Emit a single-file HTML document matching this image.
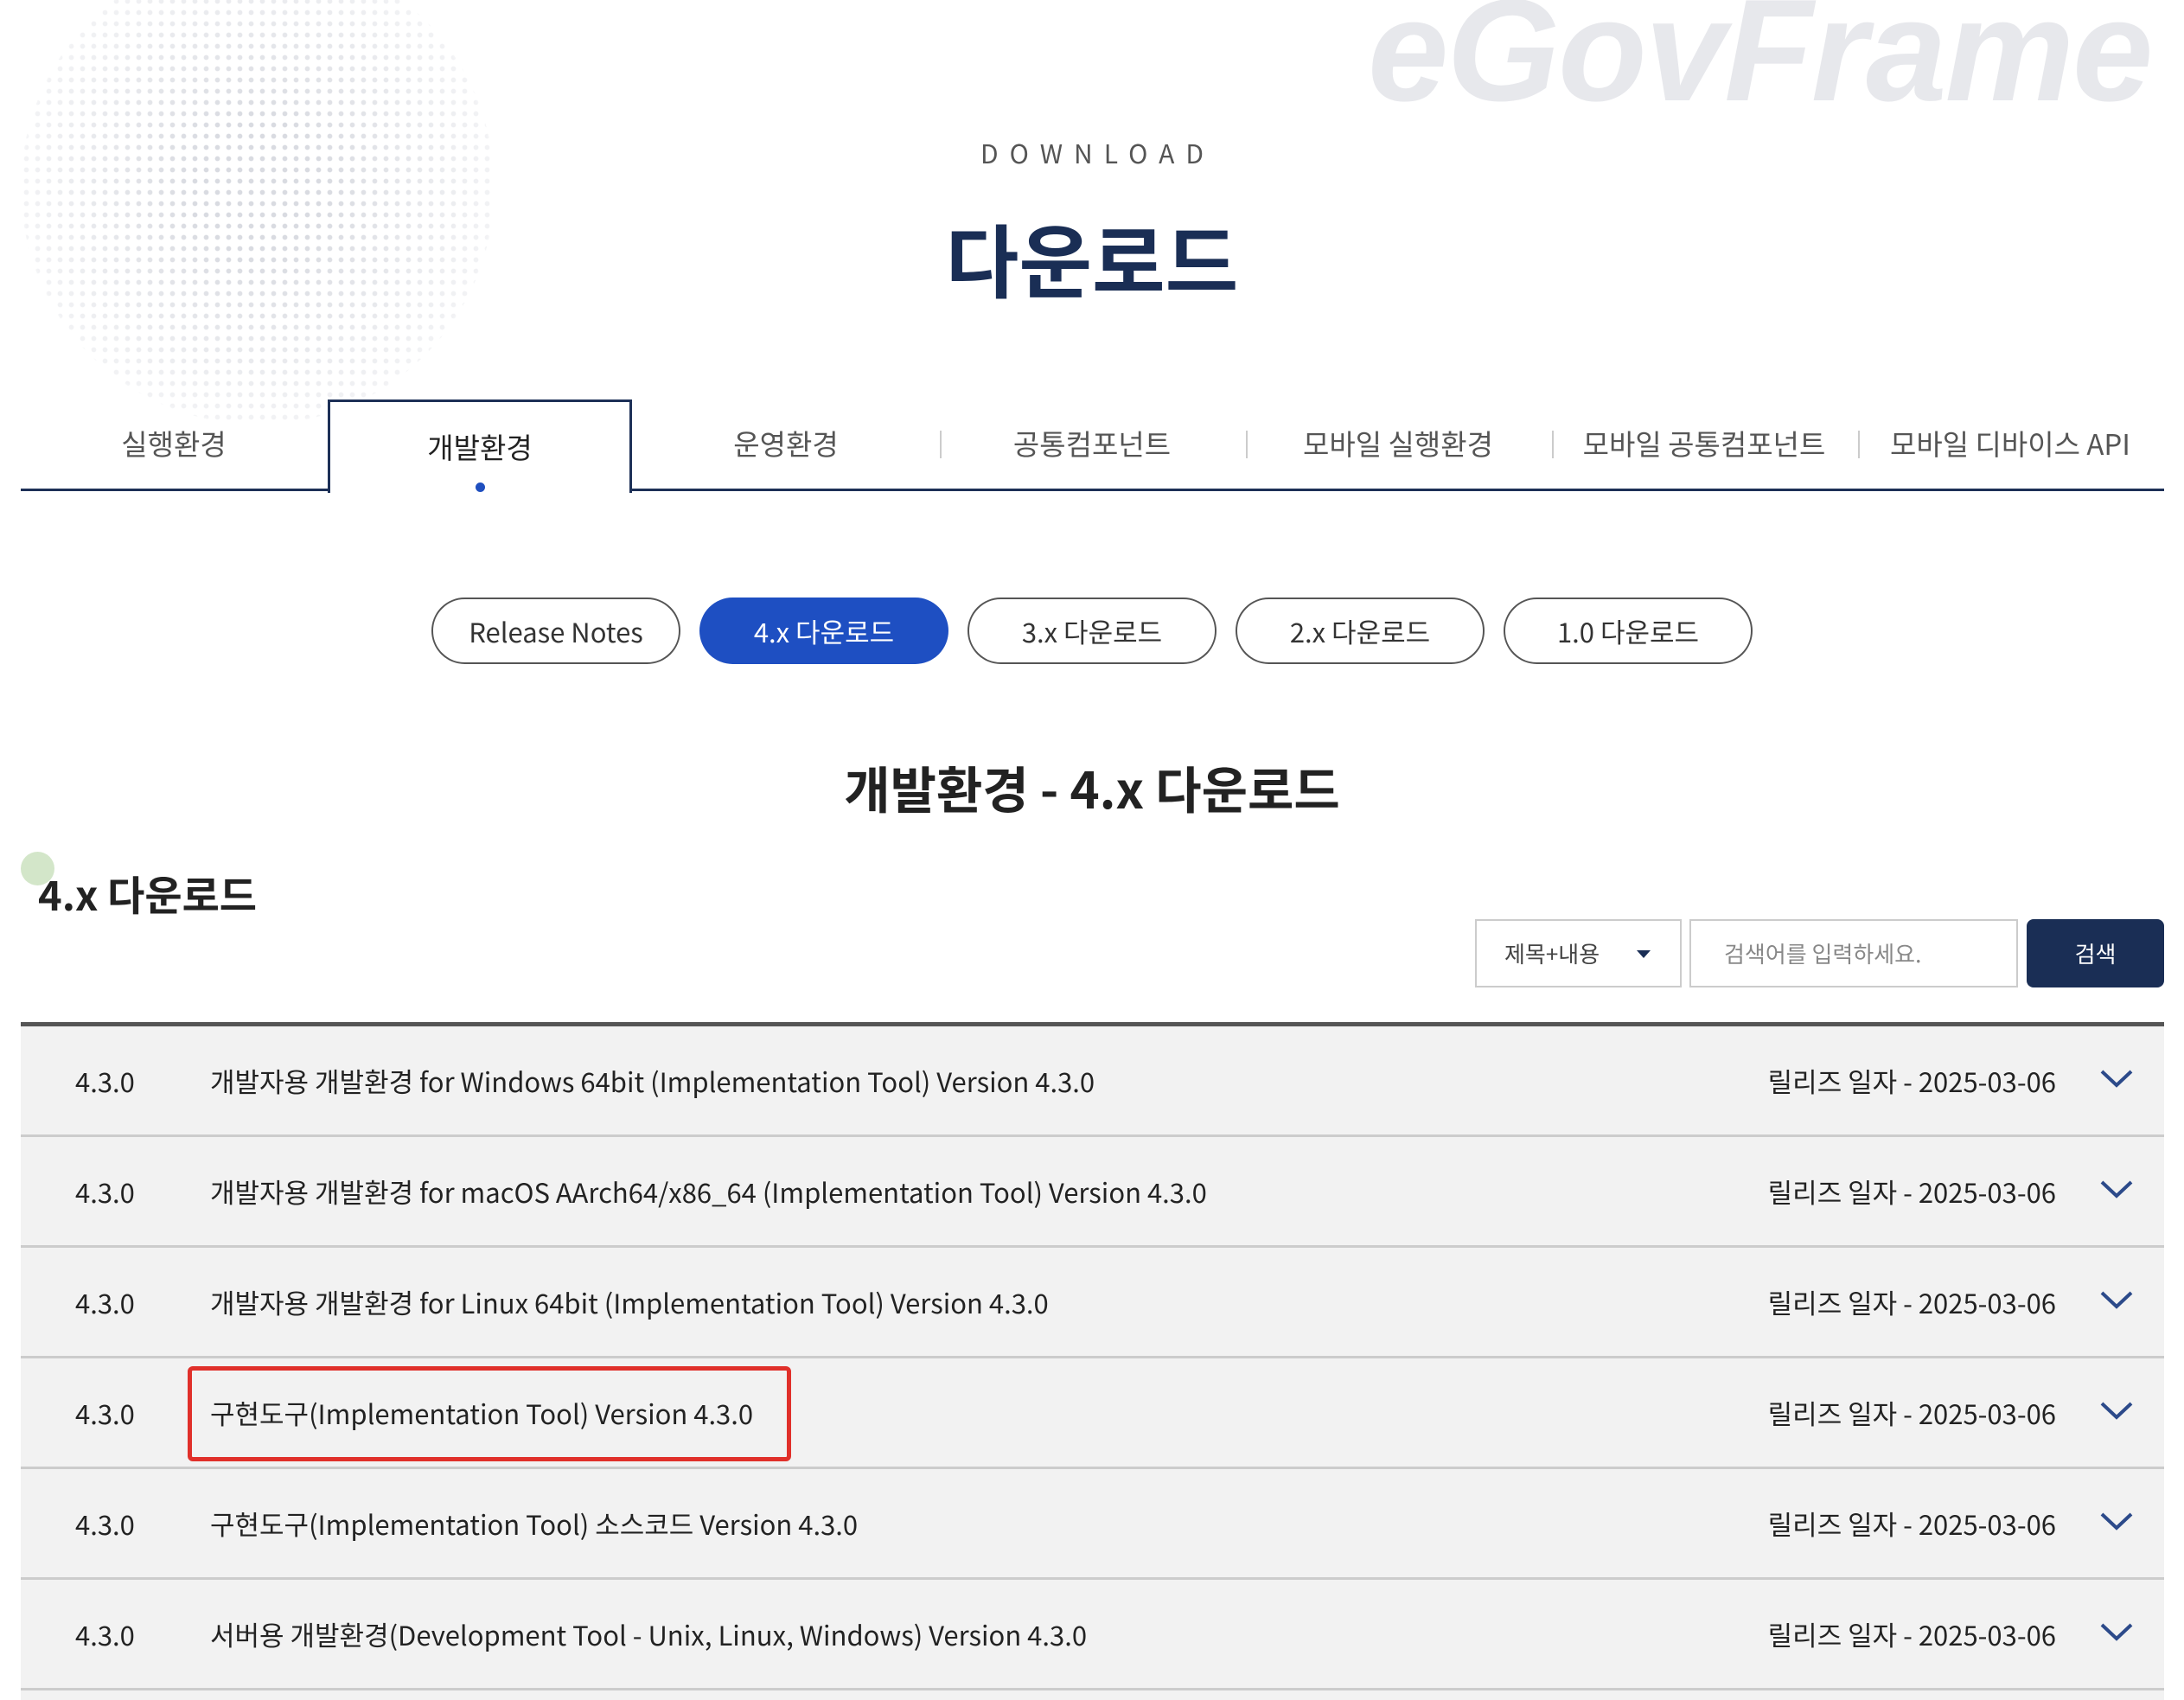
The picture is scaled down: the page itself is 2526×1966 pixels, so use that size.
<!DOCTYPE html>
<html><head><meta charset="utf-8"><style>
*{margin:0;padding:0;box-sizing:border-box}
body{width:2526px;height:1966px;background:#fff;position:relative;overflow:hidden;font-family:"Noto Sans CJK KR","Liberation Sans",sans-serif;color:#222}
.abs{position:absolute}
.dots{left:24px;top:-57px;width:548px;height:548px;border-radius:50%;background:radial-gradient(circle,#d9dbe1 2.5px,transparent 3.2px) 0 0/13px 13px;-webkit-mask:radial-gradient(circle,#000 20%,rgba(0,0,0,.35) 70%,transparent 72%);mask:radial-gradient(circle,#000 20%,rgba(0,0,0,.35) 70%,transparent 72%)}
.logo{left:1582px;top:-38px;font:italic bold 168px "Liberation Sans",sans-serif;color:#e7e8ec;letter-spacing:-2px}
.dl{left:0;width:2526px;top:154px;text-align:center;font-size:30px;letter-spacing:13px;color:#555;padding-left:13px;line-height:44px}
.h1{left:0;width:2526px;top:233px;text-align:center;font-size:92px;font-weight:bold;color:#1a2e55;line-height:130px}
.tabline{left:24px;top:565px;width:2479px;height:3px;background:#1d3057}
.tab{top:488px;width:354px;text-align:center;font-size:33px;color:#555;line-height:48px}
.active{left:379px;top:462px;width:352px;height:108px;border:3px solid #1d3057;border-bottom:none;background:#fff}
.sep{top:498px;width:2px;height:32px;background:#ccc}
.pill{top:691px;width:288px;height:77px;border:2px solid #555;border-radius:39px;text-align:center;line-height:73px;font-size:31px;color:#333}
.row{left:24px;width:2479px;height:128px;background:#f2f2f2;border-bottom:3px solid #ccc;font-size:31px;color:#222}
.row span{position:absolute;top:0;line-height:125px}
.chev{position:absolute;left:2404px;top:46px}
</style></head><body>
<div class="abs dots"></div>
<div class="abs logo">eGovFrame</div>
<div class="abs dl">DOWNLOAD</div>
<div class="abs h1">다운로드</div>
<div class="abs tabline"></div>
<div class="abs active"></div>
<div class="abs tab" style="left:24px">실행환경</div>
<div class="abs tab" style="left:378px;top:492px;color:#222">개발환경</div>
<div class="abs" style="left:550px;top:558px;width:11px;height:11px;border-radius:50%;background:#1f4fbf"></div>
<div class="abs tab" style="left:732px">운영환경</div>
<div class="abs sep" style="left:1087px"></div>
<div class="abs tab" style="left:1086px">공통컴포넌트</div>
<div class="abs sep" style="left:1441px"></div>
<div class="abs tab" style="left:1440px">모바일 실행환경</div>
<div class="abs sep" style="left:1795px"></div>
<div class="abs tab" style="left:1794px">모바일 공통컴포넌트</div>
<div class="abs sep" style="left:2149px"></div>
<div class="abs tab" style="left:2148px">모바일 디바이스 API</div>

<div class="abs pill" style="left:499px">Release Notes</div>
<div class="abs pill" style="left:809px;background:#1e4fc2;border-color:#1e4fc2;color:#fff">4.x 다운로드</div>
<div class="abs pill" style="left:1119px">3.x 다운로드</div>
<div class="abs pill" style="left:1429px">2.x 다운로드</div>
<div class="abs pill" style="left:1739px">1.0 다운로드</div>

<div class="abs" style="left:0;width:2526px;top:872px;text-align:center;font-size:58px;font-weight:bold;line-height:76px">개발환경 - 4.x 다운로드</div>
<div class="abs" style="left:24px;top:985px;width:39px;height:39px;border-radius:50%;background:#d3e6c9"></div>
<div class="abs" style="left:44px;top:1002px;font-size:47px;font-weight:bold;line-height:62px">4.x 다운로드</div>

<div class="abs" style="left:1706px;top:1063px;width:239px;height:79px;border:2px solid #ccc;font-size:26px;color:#444;line-height:75px;padding-left:32px">제목+내용<span style="position:absolute;left:185px;top:34px;border-left:8px solid transparent;border-right:8px solid transparent;border-top:9px solid #1a2e55"></span></div>
<div class="abs" style="left:1954px;top:1063px;width:380px;height:79px;border:2px solid #ccc;font-size:26px;color:#888;line-height:75px;padding-left:38px">검색어를 입력하세요.</div>
<div class="abs" style="left:2344px;top:1063px;width:159px;height:79px;background:#1a2e55;border-radius:8px;color:#fff;font-size:26px;text-align:center;line-height:79px">검색</div>

<div class="abs" style="left:24px;top:1182px;width:2479px;height:5px;background:#555"></div>
<div class="abs" style="left:24px;top:1187px;width:2479px;height:779px;background:#f2f2f2"></div>

<div class="abs row" style="top:1187px"><span style="left:63px">4.3.0</span><span style="left:219px">개발자용 개발환경 for Windows 64bit (Implementation Tool) Version 4.3.0</span><span style="right:125px">릴리즈 일자 - 2025-03-06</span><svg class="chev" width="40" height="30" viewBox="0 0 40 30"><path d="M3 6 L20 22 L37 6" fill="none" stroke="#2c4a8a" stroke-width="4"/></svg></div>
<div class="abs row" style="top:1315px"><span style="left:63px">4.3.0</span><span style="left:219px">개발자용 개발환경 for macOS AArch64/x86_64 (Implementation Tool) Version 4.3.0</span><span style="right:125px">릴리즈 일자 - 2025-03-06</span><svg class="chev" width="40" height="30" viewBox="0 0 40 30"><path d="M3 6 L20 22 L37 6" fill="none" stroke="#2c4a8a" stroke-width="4"/></svg></div>
<div class="abs row" style="top:1443px"><span style="left:63px">4.3.0</span><span style="left:219px">개발자용 개발환경 for Linux 64bit (Implementation Tool) Version 4.3.0</span><span style="right:125px">릴리즈 일자 - 2025-03-06</span><svg class="chev" width="40" height="30" viewBox="0 0 40 30"><path d="M3 6 L20 22 L37 6" fill="none" stroke="#2c4a8a" stroke-width="4"/></svg></div>
<div class="abs row" style="top:1571px"><span style="left:63px">4.3.0</span><span style="left:219px">구현도구(Implementation Tool) Version 4.3.0</span><span style="right:125px">릴리즈 일자 - 2025-03-06</span><svg class="chev" width="40" height="30" viewBox="0 0 40 30"><path d="M3 6 L20 22 L37 6" fill="none" stroke="#2c4a8a" stroke-width="4"/></svg></div>
<div class="abs row" style="top:1699px"><span style="left:63px">4.3.0</span><span style="left:219px">구현도구(Implementation Tool) 소스코드 Version 4.3.0</span><span style="right:125px">릴리즈 일자 - 2025-03-06</span><svg class="chev" width="40" height="30" viewBox="0 0 40 30"><path d="M3 6 L20 22 L37 6" fill="none" stroke="#2c4a8a" stroke-width="4"/></svg></div>
<div class="abs row" style="top:1827px"><span style="left:63px">4.3.0</span><span style="left:219px">서버용 개발환경(Development Tool - Unix, Linux, Windows) Version 4.3.0</span><span style="right:125px">릴리즈 일자 - 2025-03-06</span><svg class="chev" width="40" height="30" viewBox="0 0 40 30"><path d="M3 6 L20 22 L37 6" fill="none" stroke="#2c4a8a" stroke-width="4"/></svg></div>

<div class="abs" style="left:217px;top:1580px;width:698px;height:110px;border:5px solid #e0302a;border-radius:6px"></div>
</body></html>
